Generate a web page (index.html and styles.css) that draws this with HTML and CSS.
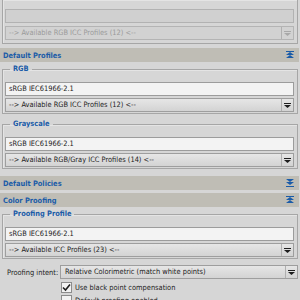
FILE: index.html
```html
<!DOCTYPE html>
<html lang="en">
<head>
    <meta charset="UTF-8">
    <title>Color Management</title>
    <link rel="stylesheet" href="styles.css">
</head>
<body>
    <div class="panel">
        <div class="group group-top">
            <div class="field disabled"></div>
            <div class="combo disabled">
                <span>--&gt; Available RGB ICC Profiles (12) &lt;--</span>
                <b class="drop"><svg width="7" height="5" viewBox="0 0 7 5"><rect x="0" y="0" width="7" height="1"/><path d="M0 2h7l-3.5 3z"/></svg></b>
            </div>
        </div>

        <div class="header">
            <span>Default Profiles</span>
            <svg class="toggle" width="8" height="8" viewBox="0 0 8 8"><rect x="0" y="0" width="8" height="1"/><path d="M4 1l4 3H0z"/><path d="M4 4l4 3H0z"/></svg>
        </div>

        <fieldset class="group">
            <legend>RGB</legend>
            <div class="field">sRGB IEC61966-2.1</div>
            <div class="combo">
                <span>--&gt; Available RGB ICC Profiles (12) &lt;--</span>
                <b class="drop"><svg width="7" height="5" viewBox="0 0 7 5"><rect x="0" y="0" width="7" height="1"/><path d="M0 2h7l-3.5 3z"/></svg></b>
            </div>
        </fieldset>

        <fieldset class="group">
            <legend>Grayscale</legend>
            <div class="field">sRGB IEC61966-2.1</div>
            <div class="combo">
                <span>--&gt; Available RGB/Gray ICC Profiles (14) &lt;--</span>
                <b class="drop"><svg width="7" height="5" viewBox="0 0 7 5"><rect x="0" y="0" width="7" height="1"/><path d="M0 2h7l-3.5 3z"/></svg></b>
            </div>
        </fieldset>

        <div class="header">
            <span>Default Policies</span>
            <svg class="toggle" width="8" height="8" viewBox="0 0 8 8"><path d="M0 0h8L4 3z"/><path d="M0 3h8L4 6z"/><rect x="0" y="7" width="8" height="1"/></svg>
        </div>

        <div class="header">
            <span>Color Proofing</span>
            <svg class="toggle" width="8" height="8" viewBox="0 0 8 8"><rect x="0" y="0" width="8" height="1"/><path d="M4 1l4 3H0z"/><path d="M4 4l4 3H0z"/></svg>
        </div>

        <fieldset class="group">
            <legend>Proofing Profile</legend>
            <div class="field">sRGB IEC61966-2.1</div>
            <div class="combo">
                <span>--&gt; Available ICC Profiles (23) &lt;--</span>
                <b class="drop"><svg width="7" height="5" viewBox="0 0 7 5"><rect x="0" y="0" width="7" height="1"/><path d="M0 2h7l-3.5 3z"/></svg></b>
            </div>
        </fieldset>

        <div class="row">
            <label class="row-label">Proofing intent:</label>
            <div class="combo">
                <span>Relative Colorimetric (match white points)</span>
                <b class="drop"><svg width="7" height="5" viewBox="0 0 7 5"><rect x="0" y="0" width="7" height="1"/><path d="M0 2h7l-3.5 3z"/></svg></b>
            </div>
        </div>

        <div class="check">
            <span class="box"><svg width="9" height="9" viewBox="0 0 9 9"><path d="M1 4.5l2.5 2.5L8 1.5" fill="none" stroke="#1e1e1e" stroke-width="1.6"/></svg></span>
            <span>Use black point compensation</span>
        </div>
        <div class="check">
            <span class="box"></span>
            <span>Default proofing enabled</span>
        </div>
    </div>
</body>
</html>
```

FILE: styles.css
```css
body {
    margin: 0;
    background-color: #d6d6d6;
    font-family: "DejaVu Sans Condensed", "DejaVu Sans", sans-serif;
    font-stretch: condensed;
    font-size: 7.4px;
    color: #222;
}

.panel {
    width: 299px;
    display: flex;
    flex-direction: column;
}

.group {
    margin: 0 1px 0 2px;
    padding: 7px 3px 1px 2px;
    border: 1px solid #a6a6a6;
    box-shadow: inset 1px 1px 0 #e4e4e4;
    display: flex;
    flex-direction: column;
    gap: 2px;
    min-width: 0;
}

.group-top {
    border-top: none;
    padding-top: 9px;
    padding-bottom: 3px;
    gap: 3px;
}

fieldset.group {
    margin-top: 1px;
    margin-bottom: 3px;
}

legend,
.header {
    font-weight: bold;
    color: #1b5ca8;
}

legend {
    margin-left: 5px;
    padding: 0 3px;
    height: 12px;
    line-height: 12px;
}

.field {
    height: 12px;
    line-height: 12px;
    padding: 0 3px;
    border: 1px solid #9c9c9c;
    background-color: #f3f3f3;
    white-space: nowrap;
}

.field.disabled {
    background-color: #d0d0d0;
    border-color: #b2b2b2;
}

.combo {
    height: 12px;
    line-height: 12px;
    display: flex;
    align-items: stretch;
    border: 1px solid #9e9e9e;
    background: linear-gradient(#e6e6e6, #d3d3d3);
    white-space: nowrap;
    overflow: hidden;
}

.combo span {
    flex: 1;
    padding-left: 3px;
    overflow: hidden;
}

.combo.disabled {
    color: #9a9a9a;
    border-color: #b4b4b4;
    background: #d2d2d2;
}

.drop {
    width: 11px;
    border-left: 1px solid #b0b0b0;
    display: flex;
    align-items: center;
    justify-content: center;
    fill: #1e1e1e;
}

.combo.disabled .drop {
    fill: #a8a8a8;
}

.header {
    height: 14px;
    margin-top: 4px;
    padding: 0 5px 0 3px;
    display: flex;
    align-items: center;
    justify-content: space-between;
    background-color: #bfbdb5;
}

.header + .header {
    margin-top: 3px;
}

.toggle {
    fill: #1b5ca8;
}

.row {
    display: flex;
    align-items: center;
    margin-top: 3px;
}

.row-label {
    width: 60px;
    padding-left: 7px;
    box-sizing: border-box;
    white-space: nowrap;
}

.row .combo {
    flex: 1;
    margin-right: 1px;
}

.row .combo span {
    padding-left: 4px;
}

.check {
    display: flex;
    align-items: center;
    gap: 3px;
    padding-left: 61px;
    margin-top: 3px;
    height: 11px;
}

.check + .check {
    margin-top: 2px;
}

.box {
    width: 9px;
    height: 9px;
    border: 1px solid #8c8c8c;
    background-color: #f2f2f2;
    display: flex;
    align-items: center;
    justify-content: center;
}
```
